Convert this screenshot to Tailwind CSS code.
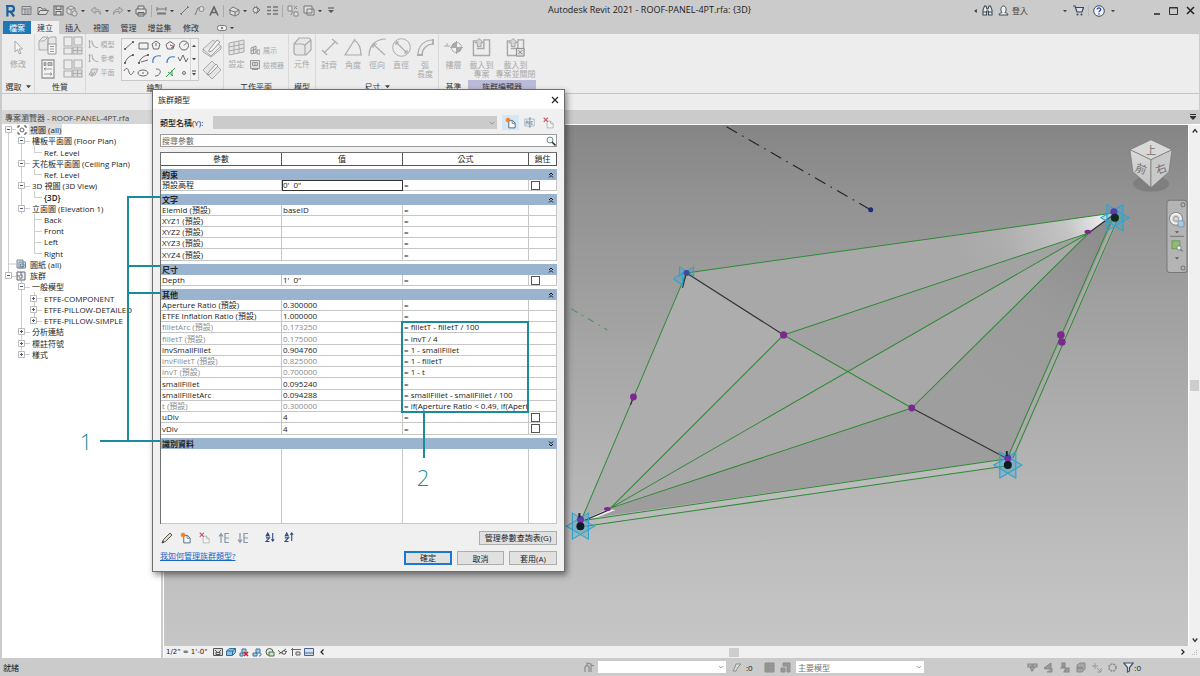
<!DOCTYPE html>
<html lang="zh-Hant">
<head>
<meta charset="utf-8">
<title>Autodesk Revit 2021</title>
<script src="https://cdn.jsdelivr.net/npm/@tailwindcss/browser@4"></script>
</head>
<body class="relative flex h-screen flex-col overflow-hidden bg-[#cbcbcb] font-['Open_Sans','Noto_Sans_CJK_TC',sans-serif] text-[8px] leading-[11px] text-[#222]">

<svg class="hidden" aria-hidden="true">
  <defs>
    <g id="star" fill="#3aa5c8" fill-opacity=".25" stroke="#2ea3cf" stroke-width="1.1">
      <path d="M-8 -13V13L14 0Z"/><path d="M8 -13V13L-14 0Z"/>
    </g>
    <symbol id="caret" viewBox="0 0 6 6"><path d="M0 1.500h6L3 5z" fill="#444"/></symbol>
    <symbol id="plus" viewBox="0 0 7 7"><path d="M.5 .5h6v6h-6z" fill="#fff" stroke="#aaa" stroke-width=".8"/><path d="M2 3.500h3M3.500 2v3" stroke="#557"/></symbol>
    <symbol id="minus" viewBox="0 0 7 7"><path d="M.5 .5h6v6h-6z" fill="#fff" stroke="#aaa" stroke-width=".8"/><path d="M2 3.500h3" stroke="#557"/></symbol>
    <symbol id="chev" viewBox="0 0 8 8"><path d="M1 2.500l3 3 3-3" fill="none" stroke="#888"/></symbol>
    <symbol id="new" viewBox="0 0 16 16"><path d="M5 4.500h5l3.500 3.500v6.500H5z" fill="#f7fafc" stroke="#4a6076" stroke-width="1.2"/><path d="M9.500 5v3.500H13" fill="none" stroke="#4a6076"/><circle cx="4" cy="4" r="2.600" fill="#f08127"/><path d="M4 0v8M0 4h8M1.200 1.200l5.600 5.600M6.800 1.200L1.200 6.800" stroke="#f08127" stroke-width=".7"/></symbol>
    <symbol id="del" viewBox="0 0 16 16"><path d="M5.500 5.500h4.500l3.500 3.500v5.500h-8z" fill="#f5f5f5" stroke="#a5a9ad"/><path d="M10 5.500v3.500h3.500" fill="none" stroke="#a5a9ad"/><path d="M1 1l5.500 5.500M6.500 1L1 6.500" stroke="#c25b6b" stroke-width="1.500"/></symbol>
    <symbol id="dup" viewBox="0 0 16 16"><path d="M1 3h14v10H1z" fill="#eef4f8" stroke="#8fa9ba"/><path d="M3 11V6h3v5M3 8.500h3M8.500 6v5M13 6.500h-2.500v4H13M8.500 1.500v13M7 1.500h3M7 14.500h3" fill="none" stroke="#5f7f93"/></symbol>
    <symbol id="load" viewBox="0 0 20 20"><path d="M5 3H1.500v15.500h17V2h-6v9H5" fill="none" stroke="#a8a8a8" stroke-width="1.500"/><path d="M5.500 9V5H3l4.500-4.500L12 5H9.500v4z" fill="#d5d5d5" stroke="#a2a2a2"/></symbol>
    <symbol id="curve" viewBox="0 0 14 12"><path d="M2 1v8M5 1c0 6 3 9 8 9" fill="none" stroke="#aaa" stroke-width="1.300"/><circle cx="2" cy="2" r="1.300" fill="#aaa"/><circle cx="2" cy="9.500" r="1.300" fill="#aaa"/></symbol>
    <symbol id="win" viewBox="0 0 20 20"><g fill="#ececec" stroke="#ababab" stroke-width="1.100"><path d="M1 1h8v9H1zM11 1h8v8h-8zM1 12h8v6H1z"/><path d="M10 11h9v7h-9z" fill="#ddd"/><path d="M10 14.500h9M14.500 11v7"/></g></symbol>
    <symbol id="undo" viewBox="0 0 12 10"><path d="M5 1L1 4.200 5 7.500V5.500c3-.3 5 .8 5.500 3C11 5 8.500 3 5 3z" fill="#c4c4c4" stroke="#909090" stroke-width=".9"/></symbol>
  </defs>
</svg>

<!-- Title bar -->
<header class="flex h-[21px] shrink-0 items-center pr-[4px]">
  <nav class="flex items-center" aria-label="快速存取工具列">
    <button class="flex w-[18px] justify-center pl-[2px]" aria-label="Revit"><svg class="h-[12px] w-[10px]" viewBox="0 0 10 12"><path d="M1 1h5.200a2.800 2.800 0 010 5.600H3.500M5.500 6.500L9 11.500M2.400 1v10.500" fill="none" stroke="#1f5f9c" stroke-width="2.200"/></svg></button>
    <button class="flex w-[16px] justify-center" aria-label="首頁"><svg class="size-[11px]" viewBox="0 0 11 11"><path d="M1 1.500h9v8H1zM1 4h9M4 4v5.500M5.500 6h3M5.500 8h3" fill="none" stroke="#7b7f84"/></svg></button>
    <button class="flex w-[17px] justify-center" aria-label="開啟"><svg class="h-[10px] w-[12px]" viewBox="0 0 12 10"><path d="M1 8.500V1.500h3l1 1.500h4v1.500M1 8.500l2-4h8.500l-2.500 4z" fill="#ddd" stroke="#6b6b6b"/></svg></button>
    <button class="flex w-[14px] justify-center" aria-label="儲存"><svg class="size-[11px]" viewBox="0 0 11 11"><path d="M1 1h9v9H1zM3 1v3.500h5V1M3 10V6.500h5V10" fill="#ddd" stroke="#666" stroke-width="1.100"/></svg></button>
    <button class="flex w-[14px] justify-center" aria-label="同步"><svg class="size-[12px]" viewBox="0 0 12 12"><path d="M1 3l4-2 4 2v5l-4 2-4-2zM1 3l4 2 4-2M5 5v5" fill="#ddd" stroke="#888"/><circle cx="8.500" cy="8.500" r="2.600" fill="#d5d5d5" stroke="#888"/></svg></button>
    <svg class="mx-[2px] size-[4px]"><use href="#caret"/></svg>
    <button class="ml-[2px] flex w-[14px] justify-center" aria-label="復原"><svg class="h-[10px] w-[12px]"><use href="#undo"/></svg></button>
    <svg class="mx-[2px] size-[4px]"><use href="#caret"/></svg>
    <button class="flex w-[14px] justify-center" aria-label="重做"><svg class="h-[10px] w-[12px] -scale-x-100"><use href="#undo"/></svg></button>
    <svg class="mx-[2px] size-[4px]"><use href="#caret"/></svg>
    <button class="flex w-[15px] justify-center" aria-label="列印"><svg class="size-[12px]" viewBox="0 0 12 12"><path d="M3 4V1h6v3M1 4h10v5H1zM3 7.500h6V11H3z" fill="#ddd" stroke="#666"/></svg></button>
    <span class="mx-[3px] h-[12px] w-px bg-[#aaa]"></span>
    <button class="flex w-[13px] justify-center" aria-label="測量"><svg class="h-[10px] w-[11px]" viewBox="0 0 11 10"><path d="M1 1v4M10 1v4M1 3h9M1 7.500h9" fill="none" stroke="#777"/><path d="M1 7.500h9" stroke="#777" stroke-width="2"/></svg></button>
    <svg class="mx-[2px] size-[4px]"><use href="#caret"/></svg>
    <button class="flex w-[16px] justify-center" aria-label="對齊標註"><svg class="size-[11px]" viewBox="0 0 11 11"><path d="M2 9l7-7M1 8l2 2M8 1l2 2" stroke="#777"/></svg></button>
    <button class="flex w-[15px] justify-center" aria-label="標籤"><svg class="size-[11px]" viewBox="0 0 11 11"><path d="M1 10L4 3h5" fill="none" stroke="#777"/><circle cx="7.500" cy="4" r="2.500" fill="#ddd" stroke="#888"/></svg></button>
    <button class="flex w-[14px] justify-center" aria-label="文字"><svg class="size-[10px]" viewBox="0 0 10 10"><path d="M1 9.500L5 .8l4 8.700M2.500 6.500h5" fill="none" stroke="#666" stroke-width="1.600"/></svg></button>
    <span class="mx-[2px] h-[12px] w-px bg-[#aaa]"></span>
    <button class="flex w-[15px] justify-center" aria-label="預設 3D 視圖"><svg class="size-[12px]" viewBox="0 0 12 12"><path d="M1 5l4-3 6 3-4 2zM2 5v4l5 2V7M7 11l4-2V5" fill="#ddd" stroke="#777"/></svg></button>
    <svg class="mx-[2px] size-[4px]"><use href="#caret"/></svg>
    <button class="flex w-[15px] justify-center" aria-label="剖面"><svg class="size-[11px]" viewBox="0 0 11 11"><path d="M3 1l4 4-4 4z" fill="#666"/><circle cx="4.500" cy="5" r="2.500" fill="#ddd" stroke="#777"/><path d="M5 1l4 4-4 4" fill="none" stroke="#777"/></svg></button>
    <button class="flex w-[16px] justify-center" aria-label="細線"><svg class="size-[11px]" viewBox="0 0 11 11"><path d="M0 2h4M6 2h5M0 5.500h4M6 5.500h5M0 9h4M6 9h5" stroke="#777" stroke-width="1.400"/></svg></button>
    <span class="mx-[2px] h-[12px] w-px bg-[#aaa]"></span>
    <button class="flex w-[16px] justify-center" aria-label="關閉非作用中視圖"><svg class="size-[12px]" viewBox="0 0 12 12"><path d="M1 1h4v5H1zM7 7h4v4H7z" fill="#ddd" stroke="#888"/><path d="M6 6l-2 4M7 1l3 3M10 1L7 4" stroke="#888"/></svg></button>
    <button class="flex w-[15px] justify-center" aria-label="切換視窗"><svg class="size-[12px]" viewBox="0 0 12 12"><path d="M1 1h8v7H1zM4 4h7v6H4z" fill="#ddd" stroke="#777"/></svg></button>
    <svg class="mx-[2px] size-[4px]"><use href="#caret"/></svg>
    <svg class="ml-[4px] h-[7px] w-[6px]" viewBox="0 0 6 7"><path d="M0 1h6" stroke="#555"/><path d="M0 3h6L3 6z" fill="#555"/></svg>
  </nav>
  <h1 class="ml-[214px] flex-1 pb-[3px] text-[9px] whitespace-nowrap">Autodesk Revit 2021 - ROOF-PANEL-4PT.rfa: {3D}</h1>
  <div class="flex items-center">
    <svg class="mr-[5px] h-[4px] w-[3px]" viewBox="0 0 4 6"><path d="M4 0v6L0 3z" fill="#333"/></svg>
    <button class="mr-[5px]" aria-label="搜尋"><svg class="size-[11px]" viewBox="0 0 11 11"><path d="M1 10V5l1.500-4h1.500l1 3h1l1-3h1.500L10 5v5H6.500V6h-2v4z" fill="#eee" stroke="#3d4b55" stroke-width="1.100"/><path d="M1 7h3.500M6.500 7H10" stroke="#3d4b55"/></svg></button>
    <button class="mr-[35px] flex items-center gap-[3px] text-[#444]"><svg class="size-[11px]" viewBox="0 0 11 11"><path d="M1 10c0-2 2-2 3-2.500C2 5 3 1 5.500 1S9 5 7 7.500c1 .5 3 .5 3 2.500z" fill="#eee" stroke="#3d4b55"/></svg>登入</button>
    <svg class="mr-[6px] size-[4px]"><use href="#caret"/></svg>
    <button class="mr-[4px]" aria-label="App Store"><svg class="size-[11px]" viewBox="0 0 11 11"><path d="M0 1h2l2 6h5l1.500-4.500H3" fill="#dde" stroke="#39465c" stroke-width="1.200"/><circle cx="4.500" cy="9.500" r="1" fill="#39465c"/><circle cx="8.500" cy="9.500" r="1" fill="#39465c"/></svg></button>
    <span class="mr-[4px] h-[11px] w-px bg-[#bbb]"></span>
    <button class="mr-[6px]" aria-label="說明"><svg class="size-[12px]" viewBox="0 0 12 12"><circle cx="6" cy="6" r="5.300" fill="#f5f7fb" stroke="#3c4c66"/><path d="M4.200 4.600c0-2.400 3.600-2.200 3.500 0 0 1.200-1.700 1.200-1.700 2.600M6 8.300v1.400" fill="none" stroke="#2344b8" stroke-width="1.300"/></svg></button>
    <svg class="mr-[39px] size-[4px]"><use href="#caret"/></svg>
    <button class="mr-[9px]" aria-label="最小化"><svg class="h-[8px] w-[6px]" viewBox="0 0 6 8"><path d="M0 7h6" stroke="#222" stroke-width="1.500"/></svg></button>
    <button class="mr-[8px]" aria-label="最大化"><svg class="size-[9px]" viewBox="0 0 9 9"><path d="M.5 1.500h8v7h-8zM.5 2h8" fill="none" stroke="#333"/></svg></button>
    <button class="mr-[1px]" aria-label="關閉"><svg class="size-[9px]" viewBox="0 0 9 9"><path d="M1 1l7 7M8 1L1 8" stroke="#222" stroke-width="1.500"/></svg></button>
  </div>
</header>

<!-- Ribbon tabs -->
<nav class="flex h-[13px] shrink-0 items-stretch pl-[3px] text-[#333]" aria-label="功能區頁籤">
  <button class="w-[28px] bg-[#1d78b5] text-white">檔案</button>
  <button class="w-[28px] bg-[#efefef]">建立</button>
  <button class="w-[28px]">插入</button>
  <button class="w-[28px]">視圖</button>
  <button class="w-[27px]">管理</button>
  <button class="w-[35px]">增益集</button>
  <button class="w-[28px]">修改</button>
  <button class="ml-[12px] flex items-center gap-[3px]" aria-label="功能區顯示"><svg class="h-[6px] w-[10px]" viewBox="0 0 10 6"><rect x=".5" y=".5" width="9" height="5" rx="2" fill="#eee" stroke="#777"/><circle cx="5" cy="3" r="1" fill="#555"/></svg><svg class="size-[4px]"><use href="#caret"/></svg></button>
</nav>

<!-- Ribbon -->
<section class="mr-px ml-[2px] flex h-[60px] shrink-0 border-b border-[#c4c4c4] bg-[#ededed] leading-[9px] text-[#a8a8a8]">
  <div class="flex w-[33px] shrink-0 flex-col items-center border-r border-[#d9d9d9]">
    <button class="flex flex-1 flex-col items-center gap-[4px] pt-[6px]"><svg class="h-[15px] w-[9px]" viewBox="0 0 9 15"><path d="M1 1v11l2.500-2.500 2 4.500 1.500-.8-2-4.200H8.500z" fill="#f5f5f5" stroke="#aaa"/></svg>修改</button>
    <button class="flex h-[13px] items-center gap-[4px] text-[#333]">選取<svg class="size-[5px]"><use href="#caret"/></svg></button>
  </div>
  <div class="flex w-[51px] shrink-0 flex-col items-center border-r border-[#d9d9d9]">
    <div class="grid flex-1 grid-cols-2 place-items-center gap-x-[5px]">
      <button aria-label="性質"><svg class="size-[20px]" viewBox="0 0 20 20"><path d="M1 5l4-4h5v13H1zM10 3l3-2h5v9h-8zM1 5h5l4-4" fill="#e6e6e6" stroke="#ababab"/><path d="M10 8h8v10h-8zM12 10.500h4M12 13h4M12 15.500h4" fill="#f5f5f5" stroke="#999"/></svg></button>
      <button aria-label="族群品類"><svg class="size-[20px]"><use href="#win"/></svg></button>
      <button aria-label="族群類型"><svg class="h-[20px] w-[14px]" viewBox="0 0 14 20"><path d="M1 1h12v18H1z" fill="#f4f4f4" stroke="#999" stroke-width="1.300"/><path d="M3 3.500h2v3H3zM7 3.500h4v3H7zM3 10h8M3 10l2-1.500M3 10l2 1.500M3 15h8M11 15l-2-1.500M11 15l-2 1.500" fill="#bbb" stroke="#999"/></svg></button>
      <button aria-label="類型性質"><svg class="size-[20px]"><use href="#win"/></svg></button>
    </div>
    <span class="h-[13px] leading-[13px] text-[#333]">性質</span>
  </div>
  <div class="flex w-[138px] shrink-0 flex-col items-center border-r border-[#d9d9d9]">
    <div class="flex flex-1 items-start gap-[3px] pt-[4px]">
      <div class="flex w-[30px] flex-col gap-[1px]">
        <button class="flex h-[13px] items-center gap-[2px] text-[7px] whitespace-nowrap"><svg class="h-[11px] w-[11px] shrink-0"><use href="#curve"/></svg>模型</button>
        <button class="flex h-[13px] items-center gap-[2px] text-[7px] whitespace-nowrap"><svg class="h-[11px] w-[11px] shrink-0"><use href="#curve"/></svg>參考</button>
        <button class="flex h-[13px] items-center gap-[2px] text-[7px] whitespace-nowrap"><svg class="h-[11px] w-[11px] shrink-0" viewBox="0 0 11 11"><path d="M1 8l3-6h6L7 8zM4 10V5M7 5L3 9" fill="#ddd" stroke="#aaa"/></svg>平面</button>
      </div>
      <div class="flex border border-[#c9c9c9] bg-[#f2f2f2]">
        <svg class="h-[41px] w-[68px]" viewBox="0 0 68 41" role="img" aria-label="繪製工具">
          <g fill="none" stroke="#5a5a5a" stroke-width=".9">
            <path d="M3 10l8-7M17 4h9v6h-9zM34 2l4 3-1.500 5h-5L30 5zM34 4v3M48 2.500l4.500 3L51 10h-5.500L44 5.500z"/>
            <circle cx="62" cy="6.500" r="4.500"/><path d="M62 6.500l3-3M3 24c1-4 4-7 8-8M17 24c1-4 4-7 9-8M19 23l7-2M56 18l2 4 3-6 3 7 2-4"/>
            <path d="M2 32c2-4 4-3 5 1s3 3 5-1M34 30c4 0 5 2 4 4s-2 3-5 3"/><ellipse cx="21" cy="34" rx="5" ry="3"/><path d="M21 33v2"/><circle cx="62" cy="34" r="1.500"/>
          </g>
          <path d="M48 6l4 1.500-3 1.500" fill="none" stroke="#b04050"/>
          <path d="M31 24c-1-5 2-8 8-7M45 24c0-5 3-7 8-6" fill="none" stroke="#3f79c0" stroke-width="1.100"/>
          <path d="M44 38l9-9M46 33l5 4M50 31v6" fill="none" stroke="#3c9a4c"/>
          <g fill="#444"><circle cx="3" cy="10" r="1"/><circle cx="11" cy="3" r="1"/><circle cx="3" cy="24" r="1"/><circle cx="11" cy="16" r="1"/><circle cx="17" cy="24" r="1"/><circle cx="26" cy="16" r="1"/></g>
        </svg>
        <div class="flex w-[8px] flex-col justify-around border-l border-[#d5d5d5]">
          <button class="flex justify-center" aria-label="上移"><svg class="size-[4px] rotate-180"><use href="#caret"/></svg></button>
          <button class="flex justify-center" aria-label="下移"><svg class="size-[4px]"><use href="#caret"/></svg></button>
          <button class="flex justify-center" aria-label="更多"><svg class="h-[6px] w-[4px]" viewBox="0 0 4 6"><path d="M0 1h4" stroke="#444"/><path d="M0 3h4L2 5.500z" fill="#444"/></svg></button>
        </div>
      </div>
      <div class="flex flex-col gap-[2px]">
        <svg class="h-[20px] w-[20px]" viewBox="0 0 20 20"><path d="M1 11l10-9 8 6-10 10zM1 11v3l8 5 10-8V8" fill="#e4e4e4" stroke="#ababab"/><path d="M7 12L15 2l3 2-8 9-3 1z" fill="#f5f5f5" stroke="#999"/></svg>
        <svg class="h-[20px] w-[20px]" viewBox="0 0 20 20"><path d="M1 10l9-9 9 9-9 9z" fill="#e4e4e4" stroke="#ababab"/><path d="M6 13L14 4l2 2-8 8-3 1z" fill="#f5f5f5" stroke="#999"/></svg>
      </div>
    </div>
    <span class="h-[13px] leading-[13px] text-[#333]">繪製</span>
  </div>
  <div class="flex w-[65px] shrink-0 flex-col items-center border-r border-[#d9d9d9]">
    <div class="flex flex-1 items-start gap-[5px] pt-[5px]">
      <button class="flex flex-col items-center gap-[3px]"><svg class="h-[17px] w-[17px]" viewBox="0 0 17 17"><path d="M1 4l15-3v12L1 16zM1 8l15-3M1 12l15-3M6 3v12M11 2v12" fill="#e4e4e4" stroke="#aaa"/></svg>設定</button>
      <div class="flex flex-col gap-[5px] pt-[6px]">
        <button class="flex items-center gap-[3px] text-[7px] whitespace-nowrap"><svg class="size-[10px]" viewBox="0 0 10 10"><path d="M1 3l5-2v7L1 9zM1 6l5-2M3.500 2v7M7 5h3v4H7z" fill="#e4e4e4" stroke="#999"/></svg>展示</button>
        <button class="flex items-center gap-[3px] text-[7px] whitespace-nowrap"><svg class="size-[10px]" viewBox="0 0 10 10"><path d="M.5 .5h9v8h-9zM2.500 2.500h5v3h-5zM2 9.500h6M5 2.500v3" fill="#ddd" stroke="#999"/></svg>檢視器</button>
      </div>
    </div>
    <span class="h-[13px] leading-[13px] text-[#333]">工作平面</span>
  </div>
  <div class="flex w-[27px] shrink-0 flex-col items-center border-r border-[#d9d9d9]">
    <button class="flex flex-1 flex-col items-center gap-[3px] pt-[3px]"><svg class="size-[19px]" viewBox="0 0 19 19"><path d="M1 7l5-6h9q3 0 3 3v9l-5 5H4q-3 0-3-3zM1 7h8q3 0 3 3v8M12 8l6-5" fill="#e6e6e6" stroke="#aaa" stroke-width="1.200"/></svg>元件</button>
    <span class="h-[13px] leading-[13px] text-[#333]">模型</span>
  </div>
  <div class="flex w-[123px] shrink-0 flex-col items-center border-r border-[#d9d9d9]">
    <div class="flex flex-1 items-start pt-[4px]">
      <button class="flex w-[24px] flex-col items-center gap-[3px]"><svg class="size-[19px]" viewBox="0 0 19 19" fill="none" stroke="#acacac"><path d="M4 15L15 4M2 12l5 5M12 1l6 5" stroke-width="1.200"/></svg>對齊</button>
      <button class="flex w-[24px] flex-col items-center gap-[3px]"><svg class="size-[19px]" viewBox="0 0 19 19" fill="none" stroke="#acacac"><path d="M11 1L1 17h17M10 2c5 3 7 9 7 15" stroke-width="1.200"/></svg>角度</button>
      <button class="flex w-[24px] flex-col items-center gap-[3px]"><svg class="size-[19px]" viewBox="0 0 19 19" fill="none" stroke="#acacac"><path d="M1 18C1 8 7 1 18 1M5 6l12 11M5 6v4M5 6h4" stroke-width="1.200"/></svg>徑向</button>
      <button class="flex w-[24px] flex-col items-center gap-[3px]"><svg class="size-[19px]" viewBox="0 0 19 19" fill="none" stroke="#acacac"><circle cx="9.500" cy="9.500" r="8.800"/><path d="M4 4l11 11M4 4v3M4 4h3M15 15v-3M15 15h-3" stroke-width="1.200"/></svg>直徑</button>
      <button class="flex w-[24px] flex-col items-center gap-[3px]"><svg class="size-[19px]" viewBox="0 0 19 19" fill="none" stroke="#acacac"><path d="M2 17C2 8 8 2 17 2M6 17c0-6 5-11 11-11" stroke-width="1.200"/><path d="M1 17h6M17 1v6" stroke-width="1.800"/></svg>弧<br>長度</button>
    </div>
    <button class="flex h-[13px] items-center gap-[4px] leading-[13px] text-[#333]">尺寸<svg class="size-[5px]"><use href="#caret"/></svg></button>
  </div>
  <div class="flex w-[29px] shrink-0 flex-col items-center">
    <button class="flex flex-1 flex-col items-center gap-[3px] pt-[4px]"><svg class="h-[19px] w-[19px]" viewBox="0 0 19 19"><path d="M0 8h6M3 5v3" stroke="#aaa"/><circle cx="12.500" cy="9.500" r="5" fill="#f2f2f2" stroke="#aaa"/><path d="M12.500 4.500a5 5 0 00-5 5h5v5a5 5 0 005-5h-5z" fill="#aaa"/><path d="M12.500 3v13M6 9.500h13" stroke="#aaa"/></svg>樓層</button>
    <span class="h-[13px] leading-[13px] text-[#333]">基準</span>
  </div>
  <div class="flex w-[68px] shrink-0 flex-col items-stretch">
    <div class="flex flex-1 items-start pt-[4px]">
      <button class="flex w-[27px] flex-col items-center gap-[3px]"><svg class="size-[19px]"><use href="#load"/></svg><span>載入到<br>專案</span></button>
      <button class="flex w-[41px] flex-col items-center gap-[3px] whitespace-nowrap"><svg class="size-[19px]" viewBox="0 0 20 20"><use href="#load"/><path d="M11 11h8v8h-8z" fill="#ddd" stroke="#888"/><path d="M13 13l4 4M17 13l-4 4" stroke="#888"/></svg><span>載入到<br>專案並關閉</span></button>
    </div>
    <span class="h-[13px] bg-[#b9b9d8] text-center leading-[13px] text-[#333]">族群編輯器</span>
  </div>
</section>
<div class="mr-px ml-[2px] h-[16px] shrink-0 bg-[#ededed]"></div>

<!-- Workspace -->
<main class="flex min-h-0 flex-1 pl-[2px]">
  <aside class="flex w-[159px] shrink-0 flex-col bg-white">
    <h2 class="h-[14px] bg-[#d6d6d6] pt-[2px] pl-[3px] whitespace-nowrap text-[#444]">專案瀏覽器 - ROOF-PANEL-4PT.rfa</h2>
    <div class="relative">
      <svg class="absolute top-0 left-0 h-[236px] w-[60px]" viewBox="0 0 60 236" fill="none" stroke="#cfcfcf" aria-hidden="true">
        <path d="M6.500 8v142M6.500 140h8M19.500 12v78M19.500 156v78M32.500 22v6M32.500 45v6M32.500 67v6M32.500 90v39M32.500 168v28M6 5.500h8M6 152.500h8M20 17.500h8M20 39.500h8M20 62.500h8M20 84.500h8M32 28.500h8M32 50.500h8M32 73.500h8M32 95.500h8M32 107.500h8M32 118.500h8M32 129.500h8M20 163.500h8M32 174.500h8M32 186.500h8M32 197.500h8M20 208.500h8M20 219.500h8M20 230.500h8"/>
      </svg>
      <ul class="relative grid h-[236px] auto-rows-fr whitespace-nowrap">
        <li class="flex items-center pl-[3px]"><svg class="mr-[5px] size-[7px]"><use href="#minus"/></svg><svg class="mr-[2px] size-[10px]" viewBox="0 0 10 10"><path d="M1 3V1h2M7 1h2v2M9 7v2H7M3 9H1V7" fill="none" stroke="#444"/><circle cx="5" cy="5" r="2" fill="none" stroke="#666"/></svg><span class="bg-[#dedede] px-[1px]">視圖 (all)</span></li>
        <li class="flex items-center pl-[16px]"><svg class="mr-[7px] size-[7px]"><use href="#minus"/></svg>樓板平面圖 (Floor Plan)</li>
        <li class="flex items-center pl-[42px]">Ref. Level</li>
        <li class="flex items-center pl-[16px]"><svg class="mr-[7px] size-[7px]"><use href="#minus"/></svg>天花板平面圖 (Ceiling Plan)</li>
        <li class="flex items-center pl-[42px]">Ref. Level</li>
        <li class="flex items-center pl-[16px]"><svg class="mr-[7px] size-[7px]"><use href="#minus"/></svg>3D 視圖 (3D View)</li>
        <li class="flex items-center pl-[42px] font-semibold">{3D}</li>
        <li class="flex items-center pl-[16px]"><svg class="mr-[7px] size-[7px]"><use href="#minus"/></svg>立面圖 (Elevation 1)</li>
        <li class="flex items-center pl-[42px]">Back</li>
        <li class="flex items-center pl-[42px]">Front</li>
        <li class="flex items-center pl-[42px]">Left</li>
        <li class="flex items-center pl-[42px]">Right</li>
        <li class="flex items-center pl-[14px]"><svg class="mr-[4px] size-[10px]" viewBox="0 0 10 10"><path d="M1 1h6v8H1zM3 3h6.500v6H3zM4.500 5h3.500v2.500H4.500z" fill="#dde6ee" stroke="#789"/></svg>圖紙 (all)</li>
        <li class="flex items-center pl-[3px]"><svg class="mr-[4px] size-[7px]"><use href="#minus"/></svg><svg class="mr-[4px] size-[10px]" viewBox="0 0 10 10"><path d="M1 1h8v8H1zM5 1v4M1 5h3M3 7h3V3.500" fill="#eef" stroke="#666"/></svg>族群</li>
        <li class="flex items-center pl-[16px]"><svg class="mr-[7px] size-[7px]"><use href="#minus"/></svg>一般模型</li>
        <li class="flex items-center pl-[28px]"><svg class="mr-[7px] size-[7px]"><use href="#plus"/></svg>ETFE-COMPONENT</li>
        <li class="flex items-center pl-[28px]"><svg class="mr-[7px] size-[7px]"><use href="#plus"/></svg>ETFE-PILLOW-DETAILED</li>
        <li class="flex items-center pl-[28px]"><svg class="mr-[7px] size-[7px]"><use href="#plus"/></svg>ETFE-PILLOW-SIMPLE</li>
        <li class="flex items-center pl-[16px]"><svg class="mr-[7px] size-[7px]"><use href="#plus"/></svg>分析連結</li>
        <li class="flex items-center pl-[16px]"><svg class="mr-[7px] size-[7px]"><use href="#plus"/></svg>標註符號</li>
        <li class="flex items-center pl-[16px]"><svg class="mr-[7px] size-[7px]"><use href="#plus"/></svg>樣式</li>
      </ul>
    </div>
  </aside>

  <section class="ml-[2px] flex min-w-0 flex-1 flex-col">
    <div class="flex h-[14px] shrink-0 items-center justify-end pr-[4px]"><svg class="h-[6px] w-[6px]" viewBox="0 0 6 6"><path d="M0 .5h6M0 2.500h6" stroke="#333"/><path d="M0 3h6L3 6z" fill="#333"/></svg></div>
    <div class="flex min-h-0 flex-1 border-t border-l border-white">
      <svg class="min-h-0 min-w-0 flex-1" viewBox="164 125 1023 521" preserveAspectRatio="xMidYMid slice" role="img" aria-label="ROOF-PANEL-4PT 3D 視圖">
        <defs>
          <linearGradient id="sky" x1="0" y1="0" x2="0" y2="1"><stop offset="0" stop-color="#858585"/><stop offset=".15" stop-color="#939393"/><stop offset=".5" stop-color="#aaa"/><stop offset=".83" stop-color="#bebebe"/><stop offset="1" stop-color="#c6c6c6"/></linearGradient>
          <linearGradient id="tip" gradientUnits="userSpaceOnUse" x1="1112" y1="214" x2="960" y2="270"><stop offset="0" stop-color="#f8f8f8"/><stop offset=".3" stop-color="#c4c4c4"/><stop offset=".7" stop-color="#adadad"/><stop offset="1" stop-color="#a8a8a8"/></linearGradient>
          <linearGradient id="side" gradientUnits="userSpaceOnUse" x1="1100" y1="225" x2="980" y2="400"><stop offset="0" stop-color="#8c8c8c"/><stop offset=".5" stop-color="#9b9b9b"/><stop offset="1" stop-color="#9e9e9e"/></linearGradient>
          <linearGradient id="cube" x1="0" y1="0" x2="0" y2="1"><stop offset="0" stop-color="#dadada"/><stop offset="1" stop-color="#c2c2c2"/></linearGradient>
        </defs>
        <rect x="164" y="125" width="1023" height="521" fill="url(#sky)"/>
        <path d="M580 522L686 273 783 335 610 508z" fill="#adadad"/>
        <path d="M686 273L1114 213 1088 233 783 335z" fill="url(#tip)"/>
        <path d="M783 335L1088 233 911 408 610 508z" fill="#a8a8a8"/>
        <path d="M783 335L1088 233 848 371z" fill="#a2a2a2"/>
        <path d="M911 408L1088 233 1114 213 1007 460z" fill="url(#side)"/>
        <path d="M610 508L911 408 1007 460 580 520z" fill="#9d9d9d"/>
        <path d="M597 517L1005 459v7L597 524z" fill="#bcbcbc"/>
        <path d="M580 521l27-12 8 1-18 7z" fill="#f0f0f0"/>
        <path d="M1112 222L1009 458h4L1116 224z" fill="#a9a9a9"/>
        <g fill="none" stroke="#2f8a35" stroke-width="1">
          <path d="M580 522L686 273 1114 213M783 335L911 408M783 335L610 508 1088 233 783 335M610 508L911 408 1088 233M585 520L1005 459M585 526L1005 466M1111 220L1007 457M1116 221L1012 458"/>
          <path d="M571 309l36 21" stroke-dasharray="7 5 2 5" stroke-opacity=".7"/>
        </g>
        <g fill="none" stroke="#333" stroke-width="1.200"><path d="M686 273L783 335M911 408L1007 459M580 522L608 510M1088 233L1114 214M686 273L682 288M633 397l-3 8"/><path d="M726 127L870 210" stroke="#222" stroke-width="1" stroke-dasharray="12 6 1.500 6"/></g>
        <g fill="#7a2a8c"><circle cx="783" cy="335" r="3.600"/><circle cx="911" cy="408" r="3.400"/><circle cx="633" cy="397" r="3.400"/><ellipse cx="1087" cy="232" rx="3.400" ry="2.200"/><ellipse cx="607" cy="509" rx="3.400" ry="2"/><circle cx="1060" cy="335" r="3.800"/><circle cx="1061" cy="342" r="3.800"/></g>
        <use href="#star" x="580" y="526"/><use href="#star" x="1007" y="465"/><use href="#star" x="1114" y="218"/>
        <path d="M679 267l14 9V267l-14 9zM673 279l9-6v12z" fill="#3aa5c8" fill-opacity=".25" stroke="#2ea3cf" stroke-width="1.100"/>
        <circle cx="686" cy="273" r="3" fill="#44479c"/><circle cx="870" cy="210" r="2.500" fill="#1b2c78"/>
        <g><circle cx="580" cy="519" r="3.500" fill="#4244b0"/><circle cx="580" cy="521" r="2.600" fill="#8a2a9c"/><circle cx="580" cy="526" r="4" fill="#0d1d24"/><path d="M579 513v4" stroke="#223" stroke-width="2"/></g>
        <g><circle cx="1007" cy="458" r="3.500" fill="#4244b0"/><circle cx="1007" cy="460" r="2.600" fill="#8a2a9c"/><circle cx="1007" cy="465" r="4" fill="#0d1d24"/><path d="M1006 451v5" stroke="#223" stroke-width="2"/></g>
        <circle cx="1113" cy="212" r="3.500" fill="#6038a8"/><circle cx="1114" cy="218" r="4" fill="#0d2a1c"/>
        <!-- View cube -->
        <ellipse cx="1150" cy="184" rx="18" ry="8" fill="#6d6d6d" fill-opacity=".5"/>
        <g stroke="#777" stroke-width=".7"><path d="M1129 150l21-10 21 10-21 10z" fill="#d8d8d8"/><path d="M1129 150l21 10v28l-18-16z" fill="url(#cube)"/><path d="M1171 150l-21 10v28l18-16z" fill="#c9c9c9"/></g>
        <g fill="#707070" font-family="'Noto Sans CJK TC', sans-serif" text-anchor="middle"><text x="1150" y="154" font-size="10">上</text><text x="1140" y="173" font-size="11" transform="rotate(20 1140 169)">前</text><text x="1160" y="173" font-size="11" transform="rotate(-20 1160 169)">右</text></g>
        <!-- Navigation bar -->
        <rect x="1166" y="200.500" width="20" height="72" rx="3" fill="#b4b4b4" stroke="#777"/>
        <g fill="none" stroke="#777"><circle cx="1182" cy="205" r="2"/><circle cx="1182" cy="268" r="2"/><path d="M1169 236.500h14"/></g>
        <circle cx="1175" cy="219" r="5" fill="#d5d5d5" stroke="#f0f0f0" stroke-width="2"/><circle cx="1175" cy="219" r="6.500" fill="none" stroke="#777" stroke-width=".7"/><circle cx="1175" cy="219" r="2.500" fill="none" stroke="#888" stroke-width=".7"/><rect x="1177" y="221" width="6" height="6" rx="1" fill="#a9c9e6" stroke="#5b86ad" stroke-width=".7"/>
        <path d="M1174 231.500h4l-2 2zM1174 257.500h4l-2 2z" fill="#555"/>
        <rect x="1171" y="241" width="8" height="8" fill="#8fbc72" stroke="#5f8a48" stroke-width=".7"/><circle cx="1178" cy="248" r="2.200" fill="#e8eef2" stroke="#667" stroke-width=".7"/><path d="M1179.500 249.500l2 2" stroke="#667"/>
      </svg>
      <div class="flex w-[12px] shrink-0 flex-col items-center justify-between border-l border-white bg-[#f0f0f0] py-[3px]">
        <svg class="size-[6px] rotate-180" viewBox="0 0 8 8"><path d="M1 2l3 4 3-4" fill="none" stroke="#333" stroke-width="1.700"/></svg>
        <span class="h-[11px] w-[9px] bg-[#cdcdcd]"></span>
        <svg class="size-[6px]" viewBox="0 0 8 8"><path d="M1 2l3 4 3-4" fill="none" stroke="#333" stroke-width="1.700"/></svg>
      </div>
    </div>
    <div class="flex h-[12px] shrink-0 items-center border-l border-white bg-[#f0f0f0] pl-[2px]">
      <button class="w-[47px] text-left font-['DejaVu_Sans'] text-[7px] whitespace-pre">1/2" = 1'-0"</button>
      <div class="flex items-center gap-[3px]">
        <button aria-label="詳細等級"><svg class="h-[8px] w-[10px]" viewBox="0 0 10 8"><path d="M.5 .5h9v7h-9zM2 2l2 2M8 2L6 4M3 4.500h4v2H3z" fill="#ddd" stroke="#555"/></svg></button>
        <button aria-label="視覺型式"><svg class="h-[8px] w-[10px]" viewBox="0 0 10 8"><path d="M.5 3l3-2.500h6v4l-3 3h-6zM.5 3h6v4M6.500 3l3-2.500" fill="#8cc1e4" stroke="#2f6f9f"/></svg></button>
        <button aria-label="太陽路徑"><svg class="h-[9px] w-[10px]" viewBox="0 0 10 9"><path d="M1 5h3v3H1zM3 1h4v4H3z" fill="#aacbe6" stroke="#3d74a6"/><path d="M5 4l4 4M9 4L5 8" stroke="#d02020" stroke-width="1.500"/></svg></button>
        <button aria-label="陰影"><svg class="h-[9px] w-[10px]" viewBox="0 0 10 9"><path d="M1 5h4v3H1zM4 1h4v4H4z" fill="#aacbe6" stroke="#3d74a6"/><path d="M8 5c2 1 1 3-1 3" fill="none" stroke="#357"/></svg></button>
        <button aria-label="裁剪"><svg class="h-[9px] w-[10px]" viewBox="0 0 10 9"><circle cx="4.500" cy="4" r="3.500" fill="#e2ece6" stroke="#555"/><path d="M4 4h5v4H4z" fill="#cfe3d4" stroke="#474"/></svg></button>
        <button aria-label="隱藏隔離"><svg class="h-[8px] w-[10px]" viewBox="0 0 10 8"><path d="M0 2c2 4 7 4 9 1M1 6l7-5" fill="none" stroke="#555"/><circle cx="6" cy="4.500" r="1.800" fill="#eee" stroke="#555"/></svg></button>
        <button aria-label="顯示隱藏"><svg class="h-[8px] w-[10px]" viewBox="0 0 10 8"><path d="M1.500 0v8M0 1.500h10M5 4h4v3H5z" fill="#ddd" stroke="#666"/></svg></button>
        <button aria-label="預覽可見性"><svg class="h-[8px] w-[10px]" viewBox="0 0 10 8"><path d="M.5 .5h9v7h-9zM.5 5h9" fill="#d5e2ee" stroke="#46648a"/></svg></button>
      </div>
      <svg class="ml-[6px] h-[6px] w-[4px]" viewBox="0 0 4 6"><path d="M3.500 .5L1 3l2.500 2.500" fill="none" stroke="#222" stroke-width="1.200"/></svg>
      <div class="flex h-full flex-1 items-center pl-[405px]"><span class="h-[9px] w-[10px] bg-[#cdcdcd]"></span></div>
      <svg class="mr-[6px] h-[6px] w-[4px]" viewBox="0 0 4 6"><path d="M.5 .5L3 3 .5 5.500" fill="none" stroke="#222" stroke-width="1.200"/></svg>
      <svg class="mr-[2px] size-[7px]" viewBox="0 0 7 7"><path d="M5 1h1v1H5zM3 3h1v1H3zM5 3h1v1H5zM1 5h1v1H1zM3 5h1v1H3zM5 5h1v1H5z" fill="#bbb"/></svg>
    </div>
  </section>
</main>

<!-- Status bar -->
<footer class="flex h-[18px] shrink-0 items-center pr-[59px] pl-[3px]">
  <span class="w-[580px]">就緒</span>
  <svg class="mr-[4px] size-[11px]" viewBox="0 0 11 11"><path d="M2 10V5l2-2 2 2v5M4 3V1l4 1v8M8 3l3 1" fill="none" stroke="#8c8c8c" stroke-width="1.200"/></svg>
  <div class="relative">
    <select class="block h-[12px] w-[128px] appearance-none bg-white" aria-label="工作集"><option></option></select>
    <svg class="pointer-events-none absolute top-[3px] right-[2px] size-[6px]"><use href="#chev"/></svg>
  </div>
  <svg class="mr-[4px] ml-[6px] size-[10px]" viewBox="0 0 10 10"><path d="M1 9l2-4 1-3h5L6 5 4 9z" fill="#ddd" stroke="#8c8c8c"/></svg>
  <span class="w-[18px]">:0</span>
  <svg class="mr-[5px] size-[11px]" viewBox="0 0 11 11"><path d="M1 1h9v9H1zM1 4h9M1 7h9M4 1v9" fill="#999" stroke="#8c8c8c"/></svg>
  <svg class="mr-[5px] size-[11px]" viewBox="0 0 11 11"><path d="M1 6h4v4H1zM3 1h7v9H7V4H3z" fill="#999" stroke="#8c8c8c"/></svg>
  <div class="relative">
    <select class="block h-[12px] w-[128px] appearance-none bg-white pl-[2px] leading-[11px] text-[#777]" aria-label="設計選項"><option>主要模型</option></select>
    <svg class="pointer-events-none absolute top-[3px] right-[2px] size-[6px]"><use href="#chev"/></svg>
  </div>
  <div class="ml-auto flex items-center gap-[5px]">
    <button aria-label="選取連結"><svg class="size-[11px]" viewBox="0 0 11 11"><path d="M1 2h4v3H1zM6 2h4v3H6zM3 5l2 4 3-4" fill="#aaa" stroke="#8a8a8a" stroke-width="1.200"/></svg></button>
    <button aria-label="選取參考底圖"><svg class="size-[11px]" viewBox="0 0 11 11"><path d="M1 6l7-5v6H2zM4 10h5V6" fill="#999" stroke="#8a8a8a"/></svg></button>
    <button aria-label="選取鎖點"><svg class="size-[11px]" viewBox="0 0 11 11"><path d="M3 1h3v4H3zM1 6h6M7 6h3v4H5z" fill="#999" stroke="#8a8a8a" stroke-width="1.200"/></svg></button>
    <button aria-label="依面選取"><svg class="size-[11px]" viewBox="0 0 11 11"><path d="M2 3l3-2h5v6l-3 3H2z" fill="#a5a5a5" stroke="#8a8a8a"/><path d="M2 6h6" stroke="#777"/></svg></button>
    <button aria-label="拖曳元素"><svg class="size-[11px]" viewBox="0 0 11 11"><path d="M4 1v6M1 4h6M6 6l4 4M10 6v4H6" fill="none" stroke="#999"/></svg></button>
    <button aria-label="背景處理"><svg class="size-[11px]" viewBox="0 0 11 11"><circle cx="5.500" cy="5.500" r="3.500" fill="none" stroke="#8f8f8f" stroke-width="1.700" stroke-dasharray="2 .8"/></svg></button>
    <button class="flex items-center" aria-label="篩選"><svg class="size-[11px]" viewBox="0 0 11 11"><path d="M.8 1h9.400L6.500 5.500V9L4.500 10V5.500z" fill="#e6ebf2" stroke="#43536b" stroke-width="1.200"/></svg>:0</button>
  </div>
</footer>

<!-- Family types dialog -->
<div role="dialog" aria-labelledby="dlg-title" class="absolute top-[89px] left-[152px] flex h-[483px] w-[413px] flex-col border border-[#6e6e6e] bg-[#f0f0f0] shadow-[2px_3px_6px_rgba(0,0,0,0.45)]">
  <div class="flex h-[19px] shrink-0 items-center justify-between bg-white pr-[5px] pl-[5px]">
    <h2 id="dlg-title">族群類型</h2>
    <button aria-label="關閉"><svg class="size-[8px]" viewBox="0 0 8 8"><path d="M1 1l6 6M7 1L1 7" stroke="#222" stroke-width="1.100"/></svg></button>
  </div>
  <div class="flex flex-1 flex-col px-[7px] pt-[6px]">
    <div class="flex h-[15px] items-center">
      <label for="type" class="w-[53px] font-medium whitespace-nowrap">類型名稱(Y):</label>
      <div class="relative">
        <select id="type" disabled class="block h-[13px] w-[284px] appearance-none bg-[#cbcbcb]"><option></option></select>
        <svg class="pointer-events-none absolute top-[4px] right-[2px] size-[6px]"><use href="#chev"/></svg>
      </div>
      <div class="ml-[5px] flex">
        <button class="flex h-[15px] w-[17px] items-center justify-center bg-[#d6e8f6]" aria-label="新類型"><svg class="size-[12px]"><use href="#new"/></svg></button>
        <button class="ml-[2px] flex h-[15px] w-[17px] items-center justify-center" aria-label="更名類型"><svg class="size-[11px]"><use href="#dup"/></svg></button>
        <button class="ml-[2px] flex h-[15px] w-[17px] items-center justify-center" aria-label="刪除類型"><svg class="size-[12px]"><use href="#del"/></svg></button>
      </div>
    </div>
    <div class="mt-[4px] flex h-[13px] w-full items-center border border-[#9b9b9b] bg-white">
      <input type="search" placeholder="搜尋參數" aria-label="搜尋參數" class="h-[11px] min-w-0 flex-1 appearance-none bg-transparent pl-[1px] leading-[11px] outline-none placeholder:text-[#666]">
      <svg class="size-[10px]" viewBox="0 0 10 10"><circle cx="4" cy="4" r="3" fill="#eef5f5" stroke="#6a8a8a"/><path d="M6 6l3.500 3.500" stroke="#333" stroke-width="1.600"/></svg>
    </div>
    <table class="mt-[5px] w-[397px] table-fixed border-separate border-spacing-0 border-t border-l border-[#6f6f6f] bg-white leading-[10px] [&_td]:border-r [&_td]:border-b [&_td]:border-[#c6c6c6] [&_td]:p-0 [&_td]:pl-[1px] [&_td]:whitespace-pre [&_th[scope=rowgroup]]:border-t-[3px] [&_th[scope=rowgroup]]:border-white [&_th[scope=rowgroup]]:bg-[#9ab3cf] [&_th[scope=rowgroup]]:p-0 [&_th[scope=rowgroup]]:pl-[1px] [&_th[scope=rowgroup]]:text-left [&_th[scope=rowgroup]]:font-semibold">
      <colgroup><col class="w-[121px]"><col class="w-[121px]"><col class="w-[126px]"><col></colgroup>
      <thead><tr class="h-[13px] [&_th]:border-r [&_th]:border-b [&_th]:border-[#555] [&_th]:p-0 [&_th]:font-normal"><th scope="col">參數</th><th scope="col">值</th><th scope="col">公式</th><th scope="col">鎖住</th></tr></thead>
      <tbody>
        <tr class="h-[14px]"><th colspan="4" scope="rowgroup"><span class="flex items-center justify-between pr-[3px]">約束<svg class="size-[6px]" viewBox="0 0 6 6"><path d="M1 3l2-2 2 2M1 5.500l2-2 2 2" fill="none" stroke="#111"/></svg></span></th></tr>
        <tr class="h-[11px]"><td>預設高程</td><td class="outline outline-[#333] -outline-offset-1">0'  0"</td><td>=</td><td><input type="checkbox" aria-label="鎖住 預設高程" class="ml-[1px] block size-[9px] appearance-none border border-[#555] bg-white"></td></tr>
      </tbody>
      <tbody>
        <tr class="h-[14px]"><th colspan="4" scope="rowgroup"><span class="flex items-center justify-between pr-[3px]">文字<svg class="size-[6px]" viewBox="0 0 6 6"><path d="M1 3l2-2 2 2M1 5.500l2-2 2 2" fill="none" stroke="#111"/></svg></span></th></tr>
        <tr class="h-[11px]"><td>ElemId (預設)</td><td>baseID</td><td>=</td><td></td></tr>
        <tr class="h-[11px]"><td>XYZ1 (預設)</td><td></td><td>=</td><td></td></tr>
        <tr class="h-[11px]"><td>XYZ2 (預設)</td><td></td><td>=</td><td></td></tr>
        <tr class="h-[11px]"><td>XYZ3 (預設)</td><td></td><td>=</td><td></td></tr>
        <tr class="h-[12px]"><td>XYZ4 (預設)</td><td></td><td>=</td><td></td></tr>
      </tbody>
      <tbody>
        <tr class="h-[14px]"><th colspan="4" scope="rowgroup"><span class="flex items-center justify-between pr-[3px]">尺寸<svg class="size-[6px]" viewBox="0 0 6 6"><path d="M1 3l2-2 2 2M1 5.500l2-2 2 2" fill="none" stroke="#111"/></svg></span></th></tr>
        <tr class="h-[11px]"><td>Depth</td><td>1'  0"</td><td>=</td><td><input type="checkbox" aria-label="鎖住 Depth" class="ml-[1px] block size-[9px] appearance-none border border-[#555] bg-white"></td></tr>
      </tbody>
      <tbody>
        <tr class="h-[14px]"><th colspan="4" scope="rowgroup"><span class="flex items-center justify-between pr-[3px]">其他<svg class="size-[6px]" viewBox="0 0 6 6"><path d="M1 3l2-2 2 2M1 5.500l2-2 2 2" fill="none" stroke="#111"/></svg></span></th></tr>
        <tr class="h-[11px]"><td>Aperture Ratio (預設)</td><td>0.300000</td><td>=</td><td></td></tr>
        <tr class="h-[11px]"><td>ETFE Inflation Ratio (預設)</td><td>1.000000</td><td>=</td><td></td></tr>
        <tr class="h-[11px]"><td class="text-[#8a8a8a]">filletArc (預設)</td><td class="text-[#8a8a8a]">0.173250</td><td>= filletT - filletT / 100</td><td></td></tr>
        <tr class="h-[12px]"><td class="text-[#8a8a8a]">filletT (預設)</td><td class="text-[#8a8a8a]">0.175000</td><td>= invT / 4</td><td></td></tr>
        <tr class="h-[11px]"><td>invSmallFillet</td><td>0.904760</td><td>= 1 - smallFillet</td><td></td></tr>
        <tr class="h-[11px]"><td class="text-[#8a8a8a]">invFilletT (預設)</td><td class="text-[#8a8a8a]">0.825000</td><td>= 1 - filletT</td><td></td></tr>
        <tr class="h-[11px]"><td class="text-[#8a8a8a]">invT (預設)</td><td class="text-[#8a8a8a]">0.700000</td><td>= 1 - t</td><td></td></tr>
        <tr class="h-[12px]"><td>smallFillet</td><td>0.095240</td><td>=</td><td></td></tr>
        <tr class="h-[11px]"><td>smallFilletArc</td><td>0.094288</td><td>= smallFillet - smallFillet / 100</td><td></td></tr>
        <tr class="h-[11px]"><td class="text-[#8a8a8a]">t (預設)</td><td class="text-[#8a8a8a]">0.300000</td><td class="overflow-x-clip">= if(Aperture Ratio &lt; 0.49, if(Apertur</td><td></td></tr>
        <tr class="h-[11px]"><td>uDiv</td><td>4</td><td>=</td><td><input type="checkbox" aria-label="鎖住 uDiv" class="ml-[1px] block size-[9px] appearance-none border border-[#555] bg-white"></td></tr>
        <tr class="h-[12px]"><td>vDiv</td><td>4</td><td>=</td><td><input type="checkbox" aria-label="鎖住 vDiv" class="ml-[1px] block size-[9px] appearance-none border border-[#555] bg-white"></td></tr>
      </tbody>
      <tbody>
        <tr class="h-[14px]"><th colspan="4" scope="rowgroup"><span class="flex items-center justify-between pr-[3px]">識別資料<svg class="size-[6px] rotate-180" viewBox="0 0 6 6"><path d="M1 3l2-2 2 2M1 5.500l2-2 2 2" fill="none" stroke="#111"/></svg></span></th></tr>
        <tr class="h-[75px]"><td></td><td></td><td></td><td></td></tr>
      </tbody>
    </table>
    <div class="mt-[6px] flex h-[15px] items-center">
      <div class="flex gap-[5px]">
        <button class="flex w-[14px] justify-center" aria-label="編輯參數"><svg class="size-[12px]" viewBox="0 0 12 12"><path d="M1 11l1.500-3.500L9 1l2 2-6.500 6.500z" fill="#e8d9b8" stroke="#555"/><path d="M1 11l1-2.200 1.200 1.200z" fill="#333"/></svg></button>
        <button class="flex w-[14px] justify-center" aria-label="新參數"><svg class="size-[12px]"><use href="#new"/></svg></button>
        <button class="flex w-[14px] justify-center" aria-label="刪除參數"><svg class="size-[12px]"><use href="#del"/></svg></button>
        <button class="flex w-[14px] justify-center" aria-label="上移參數"><svg class="size-[12px]" viewBox="0 0 12 12"><path d="M3 11V2M1 4.500L3 1.500l2 3M11 1.500H7v9h4M7 6h4" fill="none" stroke="#8a97a8" stroke-width="1.200"/></svg></button>
        <button class="flex w-[14px] justify-center" aria-label="下移參數"><svg class="size-[12px]" viewBox="0 0 12 12"><path d="M3 1v9M1 7.500l2 3 2-3M11 1.500H7v9h4M7 6h4" fill="none" stroke="#8a97a8" stroke-width="1.200"/></svg></button>
        <button class="ml-[8px] flex w-[14px] justify-center" aria-label="遞增排序"><svg class="size-[10px]" viewBox="0 0 11 11"><path d="M1 5l2-4 2 4M1.500 4h3M1 6.500h4L1 10.500h4M8.500 1v9M7 8l1.500 2L10 8" fill="none" stroke="#2c4a7c" stroke-width="1.200"/></svg></button>
        <button class="flex w-[14px] justify-center" aria-label="遞減排序"><svg class="size-[10px]" viewBox="0 0 11 11"><path d="M1 5l2-4 2 4M1.500 4h3M1 6.500h4L1 10.500h4M8.500 10V1M7 3l1.500-2L10 3" fill="none" stroke="#2c4a7c" stroke-width="1.200"/></svg></button>
      </div>
      <button class="ml-auto h-[14px] w-[78px] border border-[#adadad] bg-[#e1e1e1] whitespace-nowrap">管理參數查詢表(G)</button>
    </div>
    <div class="mt-[5px] flex h-[16px] items-center">
      <a href="#" class="mb-[6px] text-[#1a66c4] underline">我如何管理族群類型?</a>
      <div class="ml-auto flex gap-[5px]">
        <button class="h-[14px] w-[48px] border-2 border-[#1979ce] bg-[#e1e1e1] leading-[10px]">確定</button>
        <button class="h-[14px] w-[47px] border border-[#adadad] bg-[#e1e1e1]">取消</button>
        <button class="h-[14px] w-[48px] border border-[#adadad] bg-[#e1e1e1]">套用(A)</button>
      </div>
    </div>
  </div>
</div>

<!-- Callouts -->
<svg class="pointer-events-none absolute top-0 left-0 h-[676px] w-[600px]" viewBox="0 0 600 676" aria-label="標註">
  <path d="M160 197H128V441M128 266h32M128 293h32M100 441h60M402 322h126v90H402zM424 412v46" fill="none" stroke="#1a8b9b" stroke-width="2"/>
  <g fill="#1a8b9b" font-family="'Open Sans', sans-serif" font-weight="300" font-size="22" text-anchor="middle"><text x="86" y="450">1</text><text x="423" y="486">2</text></g>
</svg>
</body>
</html>
